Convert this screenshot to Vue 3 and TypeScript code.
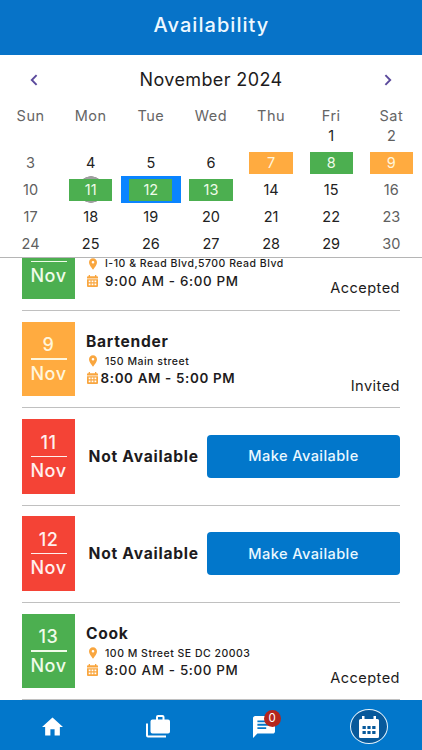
<script setup lang="ts">
type Tone = 'green' | 'orange' | 'red'

interface Day {
  n: number | null
  tone?: Tone
  today?: boolean
  selected?: boolean
}

interface Entry {
  day: number
  tone: Tone
  title?: string
  place?: string
  time?: string
  status?: string
  tight?: boolean
}

const weekdays = ['Sun', 'Mon', 'Tue', 'Wed', 'Thu', 'Fri', 'Sat']

const marks: Record<number, Partial<Day>> = {
  7: { tone: 'orange' },
  8: { tone: 'green' },
  9: { tone: 'orange' },
  11: { tone: 'green', today: true },
  12: { tone: 'green', selected: true },
  13: { tone: 'green' },
}

const days: Day[] = [
  ...Array.from({ length: 5 }, () => ({ n: null })),
  ...Array.from({ length: 30 }, (_, i) => ({ n: i + 1, ...marks[i + 1] })),
]

const entries: Entry[] = [
  { day: 8, tone: 'green', title: '', place: 'I-10 & Read Blvd,5700 Read Blvd', time: '9:00 AM - 6:00 PM', status: 'Accepted' },
  { day: 9, tone: 'orange', title: 'Bartender', place: '150 Main street', time: '8:00 AM - 5:00 PM', status: 'Invited', tight: true },
  { day: 11, tone: 'red' },
  { day: 12, tone: 'red' },
  { day: 13, tone: 'green', title: 'Cook', place: '100 M Street SE DC 20003', time: '8:00 AM - 5:00 PM', status: 'Accepted' },
]
</script>

<template>
  <div class="screen">
    <header class="header"><h1>Availability</h1></header>

    <section class="calendar">
      <div class="month">
        <svg class="chevron" viewBox="0 0 8 12"><path d="M6.6 1.2 1.8 6l4.8 4.8" /></svg>
        <span class="month-name">November 2024</span>
        <svg class="chevron" viewBox="0 0 8 12"><path d="M1.4 1.2 6.2 6l-4.8 4.8" /></svg>
      </div>
      <div class="grid weekdays">
        <span v-for="w in weekdays" :key="w">{{ w }}</span>
      </div>
      <div class="grid days">
        <div
          v-for="(d, i) in days"
          :key="i"
          class="cell"
          :class="{ weekend: i % 7 === 0 || i % 7 === 6, selected: d.selected, today: d.today }"
        >
          <span class="chip" :class="d.tone">{{ d.n }}</span>
        </div>
      </div>
    </section>

    <main class="list">
      <div class="track">
        <article v-for="(e, i) in entries" :key="e.day" class="entry">
          <div class="badge" :class="e.tone">
            <span class="num">{{ i === 0 ? '' : e.day }}</span>
            <i class="rule"></i>
            <span class="mon">Nov</span>
          </div>
          <template v-if="e.place">
            <div class="info">
              <h2>{{ e.title }}</h2>
              <div class="place">
                <svg class="pin" viewBox="5 2 14 20"><path fill-rule="evenodd" d="M12 2C8.1 2 5 5.1 5 9c0 5.3 7 13 7 13s7-7.700 7-13c0-3.900-3.100-7-7-7zm0 4.700a2.300 2.300 0 1 1 0 4.600 2.300 2.300 0 0 1 0-4.600z" /></svg>
                <span>{{ e.place }}</span>
              </div>
              <div class="time" :class="{ tight: e.tight }">
                <svg class="cal" viewBox="0 0 11 12">
                  <path d="M0 2.300Q0 1.200 1 1.200H1.700V0H3V1.200H8V0H9.300V1.200H10Q11 1.200 11 2.300V3.500H0z" />
                  <path fill-rule="evenodd" d="M0 4.200H11V11Q11 12 10 12H1Q0 12 0 11zM1.700 5.500V7.200H3.500V5.500zM4.600 5.500V7.200H6.400V5.500zM7.500 5.500V7.200H9.300V5.500zM1.700 8.500V10.200H3.500V8.500zM4.600 8.500V10.200H6.400V8.500zM7.500 8.500V10.200H9.300V8.500z" />
                </svg>
                <span>{{ e.time }}</span>
              </div>
            </div>
            <span class="status">{{ e.status }}</span>
          </template>
          <template v-else>
            <strong class="na">Not Available</strong>
            <button class="make">Make Available</button>
          </template>
        </article>
      </div>
    </main>

    <nav class="nav">
      <a class="tab"><svg class="i-home" viewBox="2 3 20 17"><path d="M10 20v-6h4v6h5v-8h3L12 3 2 12h3v8z" /></svg></a>
      <a class="tab"><svg class="i-work" viewBox="0 0 24 23">
        <path d="M0 8.500H2V20.500H20V22.500H2Q0 22.500 0 20.500z" />
        <path fill-rule="evenodd" d="M6.500 4.500H10V2Q10 0 12 0H16.500Q18.500 0 18.500 2V4.500H22Q24 4.500 24 6.500V16.500Q24 18.500 22 18.500H6.500Q4.500 18.500 4.500 16.500V6.500Q4.500 4.500 6.500 4.500zM12 2V4.500H16.500V2z" />
      </svg></a>
      <a class="tab"><span class="chat">
        <svg class="i-chat" viewBox="2 2 20 20"><path fill-rule="evenodd" d="M20 2H4c-1.100 0-2 .9-2 2v18l4-4h14c1.100 0 2-.9 2-2V4c0-1.100-.9-2-2-2zM6 6v1.700h12V6zM6 9.100v1.700h12V9.100zM6 12.200v1.700h8V12.200z" /></svg>
        <b class="count">0</b>
      </span></a>
      <a class="tab"><span class="active">
        <svg class="i-cal" viewBox="0 0 20 22"><path fill-rule="evenodd" d="M3 0H5.500V3H14.500V0H17V3H18.500Q20 3 20 4.500V20.500Q20 22 18.500 22H1.500Q0 22 0 20.500V4.500Q0 3 1.500 3H3zM3.500 10V13H6.800V10zM8.400 10V13H11.600V10zM13.200 10V13H16.500V10zM3.500 15V18H6.800V15zM8.400 15V18H11.600V15zM13.200 15V18H16.500V15z" /></svg>
      </span></a>
    </nav>
  </div>
</template>

<style>
body { background: #fff; }
</style>

<style scoped>
.screen {
  width: 422px;
  height: 750px;
  display: flex;
  flex-direction: column;
  overflow: hidden;
  background: #fff;
  color: #1d1b20;
  font-family: Inter, "Liberation Sans", sans-serif;
}
.header {
  flex: none;
  height: 54.5px;
  box-sizing: border-box;
  padding-bottom: 4px;
  display: flex;
  align-items: center;
  justify-content: center;
  background: #0773c8;
}
h1 {
  margin: 0;
  padding-left: 1px;
  font-size: 20px;
  font-weight: 500;
  letter-spacing: 1.05px;
  color: #eef8ff;
}
.calendar {
  flex: none;
  height: 203px;
  box-sizing: border-box;
  border-bottom: 1px solid #b5b5b5;
}
.month {
  height: 50px;
  padding: 0 30px;
  display: flex;
  align-items: center;
  justify-content: space-between;
}
.month-name { font-size: 18px; letter-spacing: 0.38px; }
.chevron {
  width: 8px;
  height: 12px;
  fill: none;
  stroke: #5b4a9c;
  stroke-width: 1.9;
}
.grid {
  display: grid;
  grid-template-columns: repeat(7, 60.14px);
  padding-left: 0.5px;
}
.weekdays {
  height: 17.5px;
  line-height: 22px;
  text-align: center;
  font-size: 14.500px;
  letter-spacing: 0.5px;
  color: #656565;
}
.days { grid-auto-rows: 27px; }
.cell {
  display: flex;
  align-items: center;
  justify-content: center;
  font-size: 14.500px;
  color: #222;
}
.weekend { color: #606060; }
.chip {
  width: 43.200px;
  height: 22px;
  line-height: 22px;
  text-align: center;
}
.green { background: #4caf50; color: #effbe9; }
.orange { background: #ffab40; color: #fff6dc; }
.red { background: #f44336; color: #fff0ee; }
.selected { background: #0a84ff; }
.today { background: radial-gradient(circle at center, #9e9e9e 13px, transparent 13.500px); }
.list {
  flex: 1;
  min-height: 0;
  overflow: hidden;
  padding: 0 22px;
}
.track { margin-top: -44px; }
.entry {
  height: 97.350px;
  box-sizing: border-box;
  border-bottom: 1px solid #c0c0c0;
  display: flex;
  align-items: center;
}
.badge {
  flex: none;
  width: 53px;
  height: 74.500px;
  display: flex;
  flex-direction: column;
  align-items: center;
  justify-content: center;
  font-size: 18px;
  font-weight: 500;
  letter-spacing: 0.5px;
  line-height: 28px;
}
.num { height: 28px; line-height: 29px; }
.rule { width: 36px; height: 1.400px; background: currentColor; }
.info { margin-left: 11px; padding-bottom: 1px; }
h2 {
  margin: 0;
  height: 22px;
  line-height: 22px;
  font-size: 15.600px;
  font-weight: 700;
  letter-spacing: 0.72px;
}
.place, .time { display: flex; align-items: center; white-space: nowrap; }
.place { height: 17px; font-size: 10.500px; font-weight: 500; letter-spacing: 0.5px; }
.time { height: 17px; font-size: 13.400px; font-weight: 500; letter-spacing: 0.65px; }
.pin { width: 8px; height: 12px; margin: 0 8px 0 3px; fill: #f9a63f; }
.cal { width: 11px; height: 12px; margin: 0 7px 0 1px; fill: #f9a63f; }
.tight .cal { margin-right: 2.500px; }
.tight { font-weight: 600; }
.status {
  margin-left: auto;
  align-self: flex-end;
  margin-bottom: 11.500px;
  font-size: 14.600px;
  line-height: 20px;
  letter-spacing: 0.45px;
}
.na { margin-left: 13.500px; font-size: 15.600px; font-weight: 700; letter-spacing: 0.75px; white-space: nowrap; }
.make {
  margin-left: auto;
  width: 193px;
  height: 43.500px;
  padding: 0;
  border: 0;
  border-radius: 4px;
  background: #0277cb;
  color: #eaf8ff;
  font: 450 14.600px Inter, "Liberation Sans", sans-serif;
  letter-spacing: 0.4px;
}
.nav {
  flex: none;
  height: 50px;
  display: grid;
  grid-template-columns: repeat(4, 1fr);
  background: #0277cb;
}
.tab { display: flex; align-items: center; justify-content: center; padding-top: 3px; fill: #fff; }
.i-home { width: 21px; height: 19px; }
.i-work { width: 24px; height: 23px; }
.chat { position: relative; display: flex; }
.i-chat { width: 22px; height: 22px; }
.count {
  position: absolute;
  left: 11px;
  top: -6px;
  width: 17px;
  height: 17px;
  border-radius: 50%;
  background: #b3261e;
  color: #fff;
  font-size: 11.500px;
  font-weight: 400;
  line-height: 17px;
  text-align: center;
}
.active {
  width: 38px;
  height: 35px;
  box-sizing: border-box;
  border: 1px solid #e2f1fb;
  border-radius: 50%;
  background: #07599b;
  display: flex;
  align-items: center;
  justify-content: center;
}
.i-cal { width: 20px; height: 22px; }
</style>
